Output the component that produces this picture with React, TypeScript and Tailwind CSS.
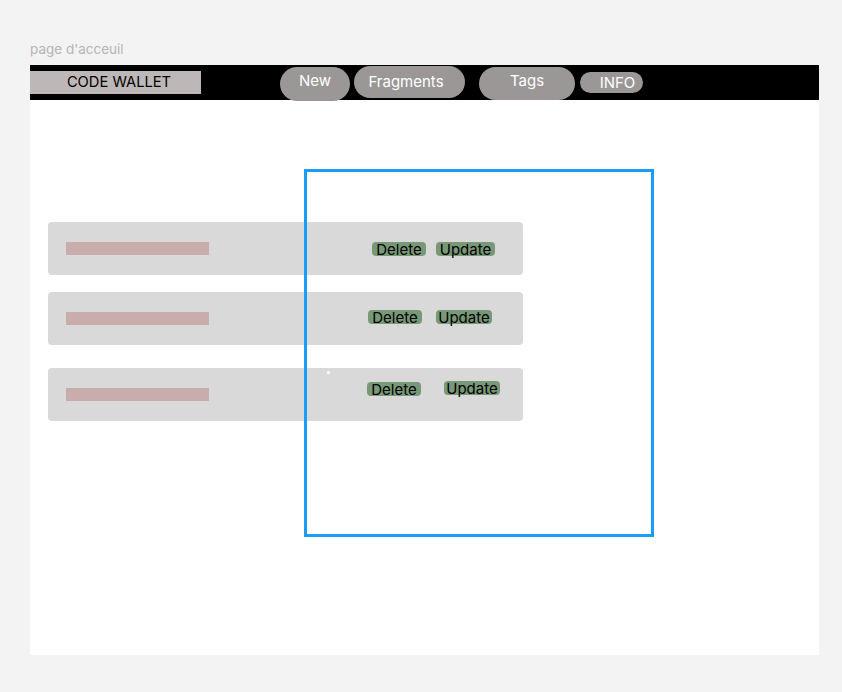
const rows = [
    { top: 'mt-0', del: { ml: 'ml-[163px]', mt: 'mt-[20px]' }, upd: { ml: 'ml-[10px]', mt: 'mt-[20px]', w: 'w-[59px]' } },
    { top: 'mt-[17px]', del: { ml: 'ml-[159px]', mt: 'mt-[18px]' }, upd: { ml: 'ml-[14px]', mt: 'mt-[18px]', w: 'w-[56px]' } },
    { top: 'mt-[23px]', del: { ml: 'ml-[158px]', mt: 'mt-[14px]' }, upd: { ml: 'ml-[23px]', mt: 'mt-[13px]', w: 'w-[56px]' } },
];

const Pill = ({ className, label }: { className: string; label: string }) => (
    <div className={`flex justify-center rounded-full bg-[#9b9797] text-[15px] text-white ${className}`}>{label}</div>
);

const App = () => {
    return (
        <div className="relative w-[842px] h-[692px] bg-[#f3f3f3] pt-[41px]" style={{ fontFamily: 'Inter, "Noto Sans", sans-serif' }}>
            <div className="ml-[30px] text-[13.5px] leading-[16px] text-[#b5b5b5] mb-[8px]">page d'acceuil</div>
            <div className="ml-[30px] w-[789px] h-[590px] bg-white">
                {/* header bar */}
                <div className="flex items-start h-[35px] bg-black">
                    <div className="mt-[6px] w-[171px] h-[23px] bg-[#bdb7b7] flex items-center justify-center pl-[7px] text-[14.7px] text-black">CODE WALLET</div>
                    <Pill label="New" className="ml-[79px] mt-[2px] w-[70px] h-[34px] items-start pt-[4px] leading-[20px]" />
                    <Pill label="Fragments" className="ml-[4px] mt-[1px] w-[111px] h-[32px] items-center pr-[7px] pt-[1px]" />
                    <Pill label="Tags" className="ml-[14px] mt-[2px] w-[96px] h-[33px] items-center pb-[5px]" />
                    <Pill label="INFO" className="ml-[5px] mt-[7px] w-[63px] h-[21px] items-center leading-[21px] pl-[12px]" />
                </div>

                {/* fragment rows */}
                <div className="ml-[18px] mt-[122px] flex flex-col">
                    {rows.map((r, i) => (
                        <div key={i} className={`flex items-start w-[475px] h-[53px] rounded-[4px] bg-[#d9d9d9] ${r.top}`}>
                            <div className="ml-[18px] mt-[20px] w-[143px] h-[13px] bg-[#c9adad]" />
                            <div className={`${r.del.ml} ${r.del.mt} w-[54px] h-[14px] rounded-[4px] bg-[#789878] text-[15px] leading-[15px] text-black flex justify-center`}>
                                Delete
                            </div>
                            <div className={`${r.upd.ml} ${r.upd.mt} ${r.upd.w} h-[14px] rounded-[4px] bg-[#789878] text-[15px] leading-[16px] text-black flex justify-center`}>
                                Update
                            </div>
                        </div>
                    ))}
                </div>
            </div>

            {/* selection frame overlay */}
            <div className="absolute left-[304px] top-[169px] w-[350px] h-[368px] border-[3px] border-[#1b9cf7]" />
            <div className="absolute left-[327px] top-[371px] w-[3px] h-[3px] rounded-full bg-white" />
        </div>
    );
};

export default App;
